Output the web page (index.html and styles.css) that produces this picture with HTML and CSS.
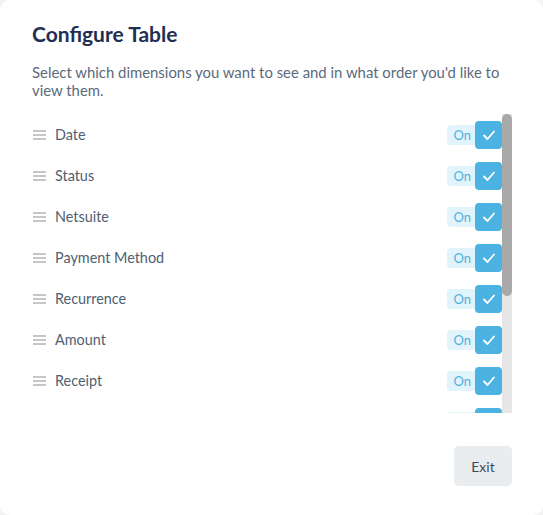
FILE: index.html
```html
<!DOCTYPE html>
<html lang="en">
<head>
    <meta charset="UTF-8">
    <meta name="viewport" content="width=device-width, initial-scale=1.0">
    <title>configure-table</title>
    <link rel="stylesheet" href="styles.css">
</head>
<body>
    <div class="modal">
        <h2 class="modal-title">Configure Table</h2>
        <p class="modal-text">Select which dimensions you want to see and in what order you'd like to view them.</p>

        <div class="list-wrap">
            <div class="dimension-list">
                <div class="dimension-row">
                    <span class="drag-handle"><i></i><i></i><i></i></span>
                    <span class="dimension-name">Date</span>
                    <span class="toggle-label">On</span>
                    <span class="toggle-box"><svg viewBox="0 0 16 16"><path d="M3 8.5 L6.5 12 L13 4.5"/></svg></span>
                </div>
                <div class="dimension-row">
                    <span class="drag-handle"><i></i><i></i><i></i></span>
                    <span class="dimension-name">Status</span>
                    <span class="toggle-label">On</span>
                    <span class="toggle-box"><svg viewBox="0 0 16 16"><path d="M3 8.5 L6.5 12 L13 4.5"/></svg></span>
                </div>
                <div class="dimension-row">
                    <span class="drag-handle"><i></i><i></i><i></i></span>
                    <span class="dimension-name">Netsuite</span>
                    <span class="toggle-label">On</span>
                    <span class="toggle-box"><svg viewBox="0 0 16 16"><path d="M3 8.5 L6.5 12 L13 4.5"/></svg></span>
                </div>
                <div class="dimension-row">
                    <span class="drag-handle"><i></i><i></i><i></i></span>
                    <span class="dimension-name">Payment Method</span>
                    <span class="toggle-label">On</span>
                    <span class="toggle-box"><svg viewBox="0 0 16 16"><path d="M3 8.5 L6.5 12 L13 4.5"/></svg></span>
                </div>
                <div class="dimension-row">
                    <span class="drag-handle"><i></i><i></i><i></i></span>
                    <span class="dimension-name">Recurrence</span>
                    <span class="toggle-label">On</span>
                    <span class="toggle-box"><svg viewBox="0 0 16 16"><path d="M3 8.5 L6.5 12 L13 4.5"/></svg></span>
                </div>
                <div class="dimension-row">
                    <span class="drag-handle"><i></i><i></i><i></i></span>
                    <span class="dimension-name">Amount</span>
                    <span class="toggle-label">On</span>
                    <span class="toggle-box"><svg viewBox="0 0 16 16"><path d="M3 8.5 L6.5 12 L13 4.5"/></svg></span>
                </div>
                <div class="dimension-row">
                    <span class="drag-handle"><i></i><i></i><i></i></span>
                    <span class="dimension-name">Receipt</span>
                    <span class="toggle-label">On</span>
                    <span class="toggle-box"><svg viewBox="0 0 16 16"><path d="M3 8.5 L6.5 12 L13 4.5"/></svg></span>
                </div>
                <div class="dimension-row">
                    <span class="drag-handle"><i></i><i></i><i></i></span>
                    <span class="dimension-name">Donor</span>
                    <span class="toggle-label">On</span>
                    <span class="toggle-box"><svg viewBox="0 0 16 16"><path d="M3 8.5 L6.5 12 L13 4.5"/></svg></span>
                </div>
            </div>
            <div class="scrollbar">
                <div class="scrollbar-thumb"></div>
            </div>
        </div>

        <div class="modal-footer">
            <button class="exit-button">Exit</button>
        </div>
    </div>
</body>
</html>
```

FILE: styles.css
```css
html, body {
    margin: 0;
    background-color: #f2f3f4;
}

.modal {
    box-sizing: border-box;
    width: 543px;
    height: 515px;
    background-color: #ffffff;
    border-radius: 10px;
    padding: 20px 31px 0 32px;
    font-family: Lato, "Open Sans", sans-serif;
}

.modal-title {
    margin: 0;
    font-size: 21px;
    font-weight: 700;
    line-height: 28px;
    color: #1f2e52;
}

.modal-text {
    margin: 15px 0 0 0;
    font-size: 14.9px;
    line-height: 18px;
    color: #5b6a7c;
}

.list-wrap {
    display: flex;
    margin-top: 15px;
    height: 299px;
}

.dimension-list {
    flex: 1;
    overflow: hidden;
}

.scrollbar {
    width: 10px;
    background-color: #e6e6e6;
}
.scrollbar-thumb {
    height: 182px;
    background-color: #a9a9a9;
    border-radius: 5px;
}

.dimension-row {
    display: flex;
    align-items: center;
    height: 41px;
}

.drag-handle {
    display: flex;
    flex-direction: column;
    gap: 2px;
    width: 13px;
    margin: 0 9px 0 1px;
}
.drag-handle i {
    display: block;
    height: 2px;
    background-color: #c6c6c6;
}

.dimension-name {
    flex: 1;
    font-size: 14.4px;
    color: #4f5f72;
}

.toggle-label {
    height: 20px;
    line-height: 20px;
    padding: 0 8px 0 6px;
    margin-right: -4px;
    border-radius: 4px 0 0 4px;
    background-color: #e1f4fc;
    color: #4cb2e0;
    font-size: 13px;
}

.toggle-box {
    display: flex;
    align-items: center;
    justify-content: center;
    width: 27px;
    height: 28px;
    border-radius: 4px;
    background-color: #4bb2e2;
}
.toggle-box svg {
    width: 16px;
    height: 16px;
    fill: none;
    stroke: #ffffff;
    stroke-width: 1.8;
    stroke-linecap: round;
    stroke-linejoin: round;
}

.modal-footer {
    display: flex;
    justify-content: flex-end;
    margin-top: 33px;
}

.exit-button {
    width: 58px;
    height: 40px;
    border: none;
    border-radius: 5px;
    background-color: #e9edf0;
    color: #3e4a57;
    font-family: Lato, "Open Sans", sans-serif;
    font-size: 14px;
}
```
